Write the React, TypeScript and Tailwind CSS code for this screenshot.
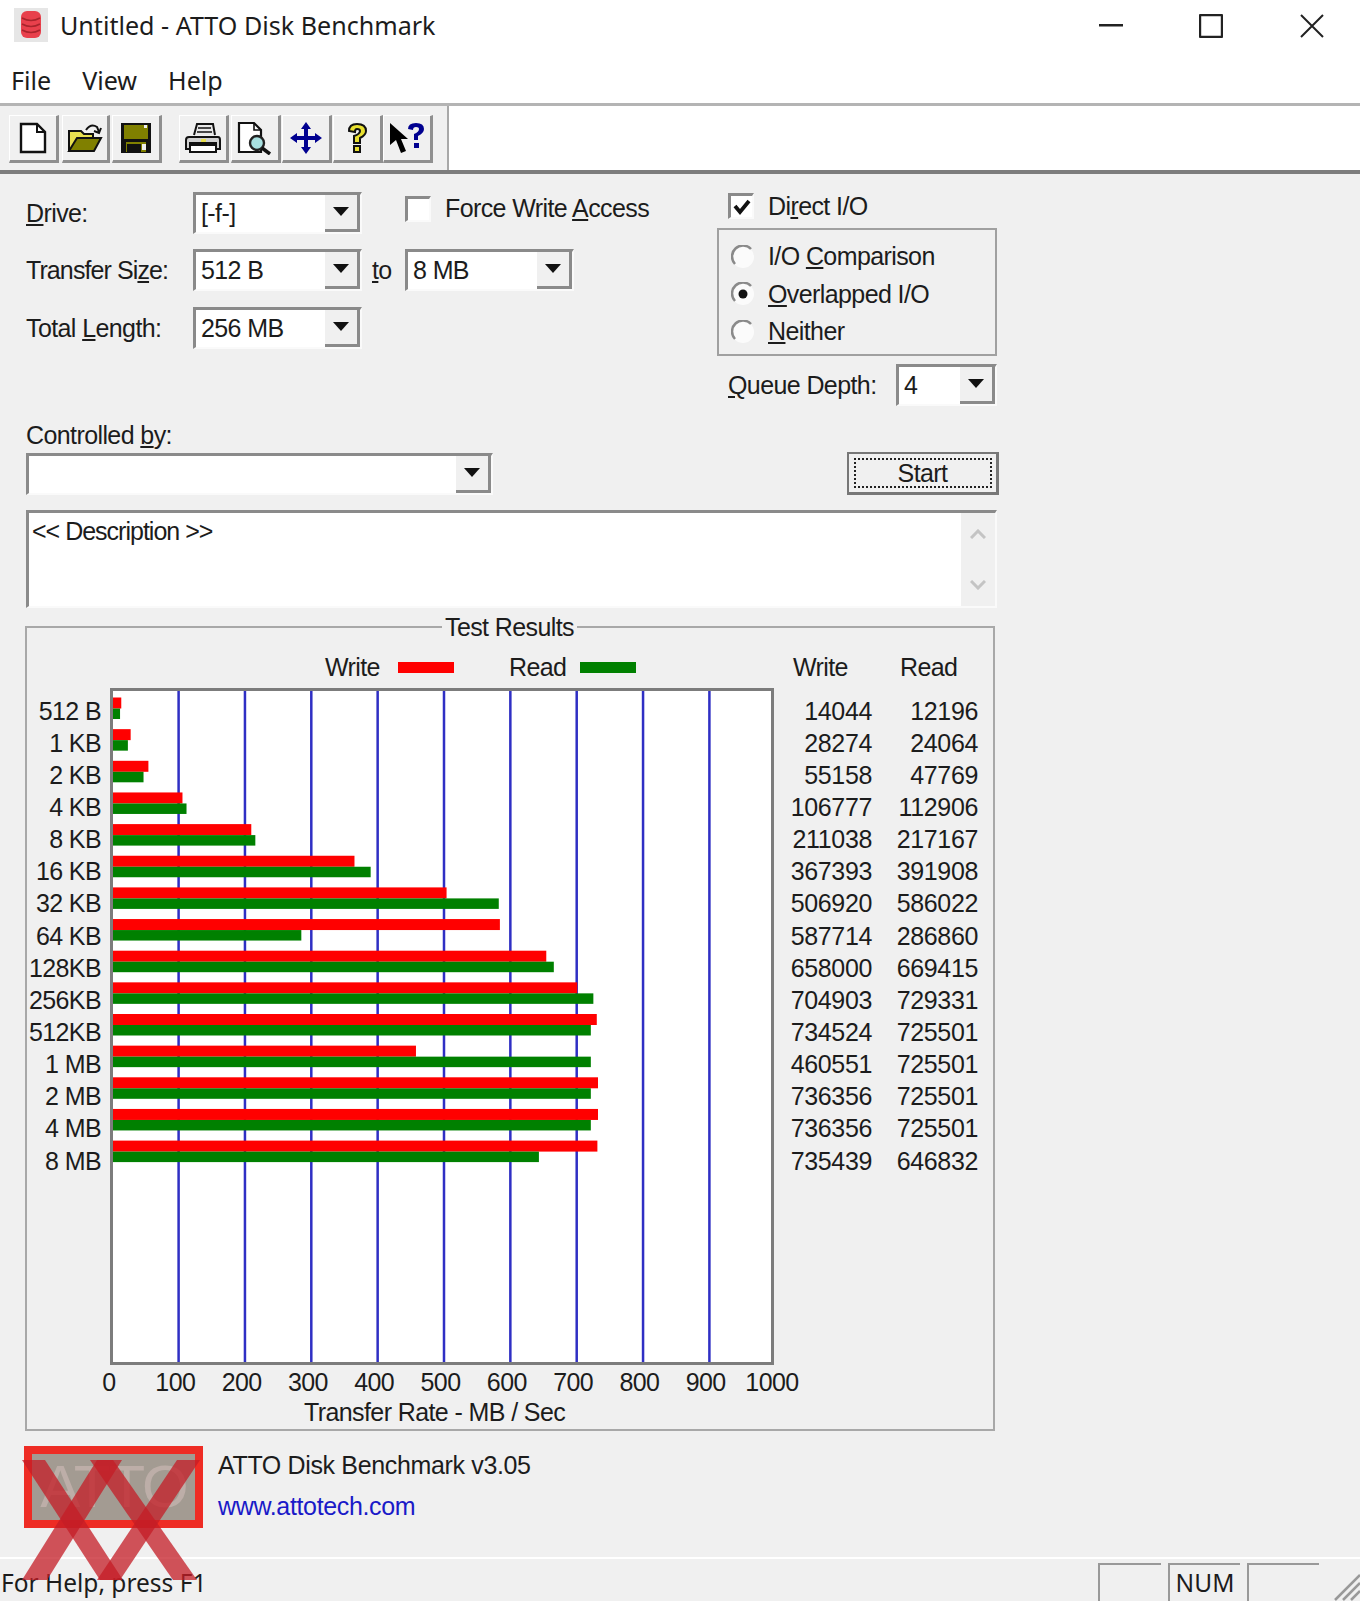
import type { ReactNode } from 'react'

const rows = [
  ['512 B', 14044, 12196],
  ['1 KB', 28274, 24064],
  ['2 KB', 55158, 47769],
  ['4 KB', 106777, 112906],
  ['8 KB', 211038, 217167],
  ['16 KB', 367393, 391908],
  ['32 KB', 506920, 586022],
  ['64 KB', 587714, 286860],
  ['128KB', 658000, 669415],
  ['256KB', 704903, 729331],
  ['512KB', 734524, 725501],
  ['1 MB', 460551, 725501],
  ['2 MB', 736356, 725501],
  ['4 MB', 736356, 725501],
  ['8 MB', 735439, 646832],
] as const

const ticks = [0, 100, 200, 300, 400, 500, 600, 700, 800, 900, 1000]

function Sunken({ className, children }: { className: string; children?: ReactNode }) {
  return (
    <div className={`border-t-[3px] border-l-[3px] border-b-[2px] border-r-[2px] border-t-[#8a8a8a] border-l-[#8a8a8a] border-b-[#fafafa] border-r-[#fafafa] bg-white ${className}`}>
      {children}
    </div>
  )
}

function Combo({ value, className }: { value?: string; className: string }) {
  return (
    <Sunken className={`flex h-[42px] ${className}`}>
      <div className="flex flex-1 items-center pl-[5px]">{value}</div>
      <div className="flex w-[35px] items-center justify-center border-r-[3px] border-b-[3px] border-r-[#8a8a8a] border-b-[#8a8a8a] bg-[#f0f0f0]">
        <svg width="16" height="10" viewBox="0 0 16 10">
          <path d="M0 0H16L8 9Z" fill="#111" />
        </svg>
      </div>
    </Sunken>
  )
}

function Check({ checked }: { checked?: boolean }) {
  return (
    <Sunken className="flex h-[26px] w-[26px] items-center justify-center">
      {checked && (
        <svg width="18" height="16" viewBox="0 0 18 16">
          <path d="M2 7L7 13L16 2" fill="none" stroke="#111" strokeWidth="3.8" />
        </svg>
      )}
    </Sunken>
  )
}

function Radio({ on, children }: { on?: boolean; children: ReactNode }) {
  return (
    <div className="flex h-[37.5px] items-center">
      <svg width="24" height="24" viewBox="0 0 24 24" className="ml-[12px] mr-[13px]">
        <circle cx="12" cy="12" r="11" fill="#fbfbfb" />
        <path d="M4 19A10.5 10.5 0 0 1 20 4" fill="none" stroke="#8a8a8a" strokeWidth="2.5" />
        {on && <circle cx="12" cy="12" r="4.5" fill="#111" />}
      </svg>
      <span>{children}</span>
    </div>
  )
}

function ToolBtn({ children, className = 'w-[50px]' }: { children: ReactNode; className?: string }) {
  return (
    <div className={`flex h-[48px] items-center justify-center border-r-[3px] border-b-[3px] border-r-[#8f8f8f] border-b-[#8f8f8f] border-t border-l border-t-white border-l-white ${className}`}>
      {children}
    </div>
  )
}

function Plot() {
  const scale = 0.00066
  return (
    <svg width="664" height="677" viewBox="0 0 664 677" className="shrink-0">
      <rect x="0" y="0" width="664" height="677" fill="#fff" />
      {ticks.slice(1, 10).map((t) => (
        <rect key={t} x={t * 0.6635 + 1} y="0" width="2.5" height="677" fill="#2f2fc4" />
      ))}
      {rows.map(([label, write, read], i) => (
        <g key={label}>
          <rect x="2" y={9.5 + i * 31.65} width={write * scale} height="11" fill="#ff0000" />
          <rect x="2" y={20.5 + i * 31.65} width={read * scale} height="10.5" fill="#008000" />
        </g>
      ))}
      <path d="M1.5 677V1.5H662.5V677" fill="none" stroke="#7c7c7c" strokeWidth="3" />
      <path d="M0 675.5H664" stroke="#7c7c7c" strokeWidth="3" />
    </svg>
  )
}

export default function App() {
  return (
    <div className="relative flex h-[1601px] w-[1360px] flex-col overflow-hidden bg-white font-['Liberation_Sans',sans-serif] text-[25px] leading-none tracking-[-0.6px] text-[#1c1c1c]">
      {/* title bar */}
      <div className="flex h-[52px] items-center font-['Noto_Sans',sans-serif] text-[25.1px] tracking-normal">
        <svg width="36" height="36" viewBox="0 0 36 36" className="ml-[13px] mr-[11px]">
          <rect x="1" y="0" width="34" height="34" fill="#e6e6e6" />
          <rect x="8" y="3" width="20" height="27" rx="6" fill="#e8404c" />
          <path d="M9 10Q18 15 27 10M9 16Q18 21 27 16M9 22Q18 27 27 22" stroke="#a8242c" strokeWidth="1.5" fill="none" />
        </svg>
        <span>Untitled - ATTO Disk Benchmark</span>
        <div className="ml-auto flex items-center">
          <svg width="24" height="4" viewBox="0 0 24 4" className="mr-[76px]"><rect width="24" height="2.5" fill="#222" /></svg>
          <svg width="24" height="24" viewBox="0 0 24 24" className="mr-[77px]"><rect x="1" y="1" width="22" height="22" rx="1" fill="none" stroke="#222" strokeWidth="2.4" /></svg>
          <svg width="24" height="24" viewBox="0 0 24 24" className="mr-[36px]"><path d="M1 1L23 23M23 1L1 23" stroke="#222" strokeWidth="2" /></svg>
        </div>
      </div>
      {/* menu */}
      <div className="flex h-[54px] items-center gap-[31px] border-b-[3px] border-b-[#b4b4b4] pl-[11px] pt-[6px] font-['Noto_Sans',sans-serif] text-[25.1px] tracking-normal">
        <span>File</span>
        <span>View</span>
        <span>Help</span>
      </div>
      {/* toolbar */}
      <div className="flex h-[68px] border-b-[4px] border-b-[#7d7d7d]">
        <div className="flex w-[449px] items-start border-r-[2px] border-r-[#a8a8a8] bg-[#f0f0f0] pl-[9px] pt-[9px]">
          <ToolBtn>
            <svg width="28" height="32" viewBox="0 0 28 32"><path d="M2 2H18L26 10V30H2Z" fill="#fff" stroke="#111" strokeWidth="2.4" /><path d="M18 2V10H26" fill="none" stroke="#111" strokeWidth="2" /></svg>
          </ToolBtn>
          <ToolBtn className="ml-[3px] w-[48px]">
            <svg width="36" height="32" viewBox="0 0 36 32"><path d="M2 29V9H14L17 12H26V17" fill="#e8e050" stroke="#111" strokeWidth="2" /><path d="M2 29L10 16H34L27 29Z" fill="#808000" stroke="#111" strokeWidth="2" /><path d="M19 8Q24 1 30 5L32 10M34 6L32 11L27 9" fill="none" stroke="#111" strokeWidth="2" /></svg>
          </ToolBtn>
          <ToolBtn className="ml-[2px] w-[50px]">
            <svg width="32" height="32" viewBox="0 0 32 32"><rect x="1" y="1" width="30" height="30" fill="#111" /><rect x="4" y="3" width="24" height="14" fill="#808000" /><rect x="6" y="20" width="20" height="10" fill="#808000" /><rect x="7" y="22" width="14" height="8" fill="#111" /><rect x="22" y="22" width="4" height="6" fill="#eee" /><rect x="24" y="3" width="3" height="3" fill="#eee" /></svg>
          </ToolBtn>
          <ToolBtn className="ml-[17px] w-[50px]">
            <svg width="36" height="32" viewBox="0 0 36 32"><path d="M9 13L12 2H28L30 13" fill="#e8e8e8" stroke="#111" strokeWidth="2" /><path d="M13 6H26M12 10H27" stroke="#111" strokeWidth="1.5" /><path d="M4 15H33Q35 15 35 18V27H1V18Q1 15 4 15Z" fill="#d0d0d0" stroke="#111" strokeWidth="2" /><path d="M4 21H32" stroke="#111" strokeWidth="2" /><rect x="5" y="23" width="26" height="7" fill="#fff" stroke="#111" strokeWidth="2" /><rect x="16" y="17" width="5" height="3" fill="#e8e050" /></svg>
          </ToolBtn>
          <ToolBtn className="ml-[2px] w-[50px]">
            <svg width="36" height="34" viewBox="0 0 36 34"><path d="M2 2H17L24 9V31H2Z" fill="#fff" stroke="#111" strokeWidth="2.2" /><path d="M17 2V9H24" fill="none" stroke="#111" strokeWidth="1.6" /><circle cx="20" cy="22" r="7" fill="#a8e0e0" stroke="#222" strokeWidth="2.4" /><path d="M25 27L33 33" stroke="#111" strokeWidth="3.5" /></svg>
          </ToolBtn>
          <ToolBtn className="ml-[1px] w-[50px]">
            <svg width="34" height="34" viewBox="0 0 34 34"><path d="M17 1L22 8H19V15H26V12L33 17L26 22V19H19V26H22L17 33L12 26H15V19H8V22L1 17L8 12V15H15V8H12Z" fill="#000090" /></svg>
          </ToolBtn>
          <ToolBtn className="ml-[1px] w-[50px]">
            <svg width="24" height="32" viewBox="0 0 24 32"><path d="M4 9Q4 2 12 2Q21 2 21 9Q21 13 15 16V21H9V14Q15 12 15 9Q15 7 12 7Q10 7 10 10Z" fill="#e8e030" stroke="#111" strokeWidth="2" /><rect x="9" y="24" width="6" height="6" fill="#e8e030" stroke="#111" strokeWidth="2" /></svg>
          </ToolBtn>
          <ToolBtn>
            <svg width="36" height="34" viewBox="0 0 36 34"><path d="M1 2V24L7 19L12 32L17 30L12 18H19Z" fill="#000" /><path d="M19 8Q19 2 27 2Q35 2 35 8Q35 12 29 15V19H25V13Q30 11 30 8Q30 6 27 6Q24 6 24 9Z" fill="#000090" /><rect x="25" y="22" width="5" height="5" fill="#000090" /></svg>
          </ToolBtn>
        </div>
      </div>
      {/* form */}
      <div className="flex flex-1 flex-col bg-[#f0f0f0] pl-[26px]">
        <div className="flex h-[232px]">
          <div className="w-[691px] pt-[18px]">
            <div className="flex h-[42px] items-center">
              <span className="w-[167px]"><span className="underline">D</span>rive:</span>
              <Combo value="[-f-]" className="w-[169px]" />
              <div className="mb-[9px] ml-[43px] flex items-center gap-[14px]">
                <Check />
                <span>Force Write <span className="underline">A</span>ccess</span>
              </div>
            </div>
            <div className="mt-[15px] flex h-[42px] items-center">
              <span className="w-[167px] tracking-[-0.9px]">Transfer Si<span className="underline">z</span>e:</span>
              <Combo value="512 B" className="w-[169px]" />
              <span className="w-[43px] pl-[10px]"><span className="underline">t</span>o</span>
              <Combo value="8 MB" className="w-[169px]" />
            </div>
            <div className="mt-[16px] flex h-[42px] items-center">
              <span className="w-[167px]">Total <span className="underline">L</span>ength:</span>
              <Combo value="256 MB" className="w-[169px]" />
            </div>
          </div>
          <div className="w-[280px] pt-[19px]">
            <div className="flex items-center gap-[14px] pl-[11px]">
              <Check checked />
              <span>Di<span className="underline">r</span>ect I/O</span>
            </div>
            <div className="mt-[9px] h-[128px] border-2 border-[#a0a0a0] pt-[8px]">
              <Radio>I/O <span className="underline">C</span>omparison</Radio>
              <Radio on><span className="underline">O</span>verlapped I/O</Radio>
              <Radio><span className="underline">N</span>either</Radio>
            </div>
            <div className="mt-[8px] flex items-center pl-[11px]">
              <span className="w-[168px] shrink-0"><span className="underline">Q</span>ueue Depth:</span>
              <Combo value="4" className="w-[101px] shrink-0" />
            </div>
          </div>
        </div>
        <div className="mt-[17px] flex w-[973px] items-end justify-between">
          <div>
            <div className="mb-[5px]">Controlled <span className="underline">b</span>y:</div>
            <Combo className="w-[467px]" />
          </div>
          <div className="flex h-[43px] w-[152px] items-center justify-center border-r-[3px] border-b-[3px] border-t-2 border-l-2 border-[#777]">
            <div className="flex h-[30px] w-[138px] items-center justify-center border-2 border-dotted border-[#222]">Start</div>
          </div>
        </div>
        <Sunken className="mt-[15px] flex h-[98px] w-[971px]">
          <div className="flex-1 pl-[3px] pt-[6px] tracking-[-1px]">&lt;&lt; Description &gt;&gt;</div>
          <div className="flex w-[34px] flex-col items-center justify-between bg-[#f0f0f0] py-[16px]">
            <svg width="16" height="10" viewBox="0 0 16 10"><path d="M1 9L8 2L15 9" fill="none" stroke="#c4c4c4" strokeWidth="3" /></svg>
            <svg width="16" height="10" viewBox="0 0 16 10"><path d="M1 1L8 8L15 1" fill="none" stroke="#c4c4c4" strokeWidth="3" /></svg>
          </div>
        </Sunken>
        {/* test results */}
        <div className="relative ml-[-1px] mt-[18px] h-[805px] w-[970px] border-2 border-[#a8a8a8]">
          <span className="absolute left-[415px] top-[-13px] bg-[#f0f0f0] px-[3px]">Test Results</span>
          <div className="flex h-[60px] items-center pt-[18px]">
            <span className="ml-[298px] w-[58px]">Write</span>
            <div className="ml-[15px] h-[11px] w-[56px] bg-[#ff0000]" />
            <span className="ml-[55px] w-[58px]">Read</span>
            <div className="ml-[13px] h-[11px] w-[56px] bg-[#008000]" />
            <span className="ml-[157px] w-[58px]">Write</span>
            <span className="ml-[49px]">Read</span>
          </div>
          <div className="flex">
            <div className="w-[74px] shrink-0 pt-[7px] text-right">
              {rows.map(([label]) => (
                <div key={label} className="flex h-[32.15px] items-center justify-end">{label}</div>
              ))}
            </div>
            <div className="ml-[9px]"><Plot /></div>
            <div className="ml-[16px] w-[188px] pt-[7px] tracking-[-0.35px]">
              {rows.map(([label, write, read]) => (
                <div key={label} className="flex h-[32.15px] items-center text-right">
                  <span className="w-[82px]">{write}</span>
                  <span className="w-[106px]">{read}</span>
                </div>
              ))}
            </div>
          </div>
          <div className="ml-[82px] mt-[5px] flex w-[663px] justify-between">
            {ticks.map((t) => (
              <div key={t} className="flex w-0 justify-center">{t}</div>
            ))}
          </div>
          <div className="mt-[5px] pl-[277px]">Transfer Rate - MB / Sec</div>
        </div>
        <div className="ml-[-2px] mt-[15px] flex">
          <div className="flex h-[82px] w-[179px] items-center justify-center border-[8px] border-[#ee2c24] bg-[#a39b92] text-[60px] tracking-[-2px] text-[#bdaea8]">ATTO</div>
          <div className="ml-[15px] pt-[7px] tracking-[-0.35px]">
            <div>ATTO Disk Benchmark v3.05</div>
            <div className="mt-[16px] text-[#1a1ac8]">www.attotech.com</div>
          </div>
        </div>
      </div>
      {/* status bar */}
      <div className="flex h-[44px] items-end border-t-[2px] border-t-white bg-[#f0f0f0] font-['Noto_Sans',sans-serif] text-[24.5px] tracking-normal">
        <span className="pb-[6px] pl-[1px]">For Help, press F1</span>
        <div className="ml-auto flex h-[38px] items-stretch">
          <div className="w-[63px] border-t-[2px] border-l-[2px] border-t-[#999] border-l-[#999]" />
          <div className="ml-[7px] flex w-[72px] items-center justify-center border-t-[2px] border-l-[2px] border-t-[#999] border-l-[#999]">NUM</div>
          <div className="ml-[7px] w-[72px] border-t-[2px] border-l-[2px] border-t-[#999] border-l-[#999]" />
          <svg width="41" height="38" viewBox="0 0 41 38"><path d="M16 37L41 12M24 37L41 20M32 37L41 28" stroke="#999" strokeWidth="2.5" /></svg>
        </div>
      </div>
      {/* watermark */}
      <svg width="200" height="120" viewBox="0 0 200 120" className="pointer-events-none absolute left-[21px] top-[1460px]">
        <g fill="#c41c26" fillOpacity="0.75">
          <path d="M1 0H24L102 120H79Z" />
          <path d="M101 0H76L1 120H26Z" />
          <path d="M69 0H92L176 120H152Z" />
          <path d="M179 0H156L76 120H99Z" />
        </g>
      </svg>
    </div>
  )
}
